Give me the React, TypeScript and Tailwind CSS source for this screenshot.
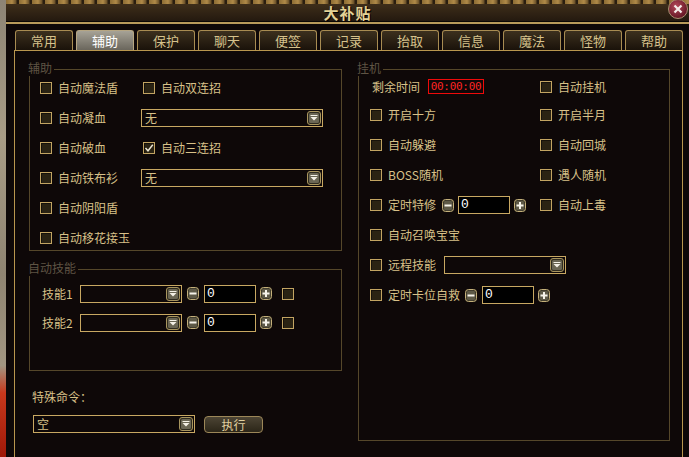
import React from 'react'

function Check({ checked }: { checked?: boolean }) {
  return (
    <span className="w-[12px] h-[12px] shrink-0 border border-[#c2a462] bg-[#2a2313] shadow-[inset_1px_1px_0_#15110a] flex items-center justify-center">
      {checked && (
        <svg width="10" height="10" viewBox="0 0 10 10">
          <path d="M1.5 5 L4 7.8 L8.8 1.8" stroke="#ece6d4" strokeWidth="1.4" fill="none" />
        </svg>
      )}
    </span>
  )
}

function Option({ label, checked }: { label: string; checked?: boolean }) {
  return (
    <div className="flex items-center gap-[6px]">
      <Check checked={checked} />
      <span className="whitespace-nowrap">{label}</span>
    </div>
  )
}

function Arrow() {
  return (
    <svg width="14" height="14" viewBox="0 0 14 14" className="shrink-0">
      <rect x="0.5" y="0.5" width="13" height="13" rx="2.5" fill="#2f2b1f" stroke="#a8955e" />
      <rect x="2" y="2" width="10" height="10" rx="1.5" fill="#6a6654" />
      <rect x="3.5" y="4" width="7" height="1" fill="#f4f1e6" />
      <path d="M3.5 6 H10.5 L7 9.5 Z" fill="#f4f1e6" />
    </svg>
  )
}

function Select({ w, text }: { w: string; text?: string }) {
  return (
    <div className={`${w} h-[18px] shrink-0 border border-[#c8a862] bg-[#0e0808] flex items-center justify-between pl-[3px] pr-[1px]`}>
      <span className="text-[12px]">{text}</span>
      <Arrow />
    </div>
  )
}

function Spin({ plus }: { plus?: boolean }) {
  return (
    <svg width="12" height="13" viewBox="0 0 12 13" className="shrink-0">
      <rect x="0.5" y="0.5" width="11" height="12" rx="3" fill="#3a3526" stroke="#c4b07a" />
      <rect x="1.8" y="1.8" width="8.4" height="9.4" rx="2" fill="#5e5a48" />
      <rect x="2.5" y="5.5" width="7" height="2" fill="#f6f3ea" />
      {plus && <rect x="5" y="3" width="2" height="7" fill="#f6f3ea" />}
    </svg>
  )
}

function NumInput() {
  return (
    <div className="w-[52px] h-[18px] shrink-0 border border-[#c8a862] bg-black text-white pl-[2px] flex items-center font-['Liberation_Mono',monospace] text-[13px]">
      0
    </div>
  )
}

function Group({ title, className, children }: { title: string; className: string; children: React.ReactNode }) {
  return (
    <div className={`relative border border-[#55472a] ${className}`}>
      <span className="absolute left-[-2px] top-[-10px] h-[16px] leading-[16px] pr-[2px] bg-[#0e0808] text-[#5f5444]">{title}</span>
      {children}
    </div>
  )
}

const tabs = ['常用', '辅助', '保护', '聊天', '便签', '记录', '抬取', '信息', '魔法', '怪物', '帮助']

export default function App() {
  return (
    <div className="w-[689px] h-[457px] overflow-hidden flex bg-[#0e0808] text-[12px] leading-[14px] text-[#d8c188] font-['Noto_Sans_CJK_SC','Noto_Sans',sans-serif]">
      <div className="w-[6px] h-full shrink-0 bg-[linear-gradient(180deg,#8d8475_0%,#a89c86_30%,#8f8472_60%,#a29682_80%,#c8381c_86%,#a01808_100%)]" />

      <div className="flex-1 flex flex-col min-w-0">
        {/* title bar */}
        <div className="relative h-[24px] shrink-0 flex flex-col">
          <div className="h-[4px] bg-[repeating-linear-gradient(90deg,#8c6c34_0px,#b08a48_6px,#6a5028_10px,#2a1e10_11px,#2a1e10_13px)]" />
          <div className="flex-1 flex items-center justify-center bg-[linear-gradient(180deg,#3e2e1a,#24190f)]">
            <span className="text-[15px] font-bold text-[#e4d296] tracking-[1px] [text-shadow:1px_1px_0_#000]">大补贴</span>
          </div>
          <div className="h-[1px] bg-[#0a0604]" />
          <div className="h-[2px] bg-[#b89a5a]" />
          <div className="absolute top-[-1px] right-[1px] w-[20px] h-[20px] rounded-full border border-[#a89070] bg-[radial-gradient(circle_at_40%_35%,#b44a5a,#6a1a28_70%)] flex items-center justify-center">
            <svg width="10" height="10" viewBox="0 0 10 10">
              <path d="M1.5 1.5 L8.5 8.5 M8.5 1.5 L1.5 8.5" stroke="#f4ece8" strokeWidth="2.2" />
            </svg>
          </div>
        </div>

        <div className="h-[6px] shrink-0" />

        {/* tabs */}
        <div className="h-[20px] shrink-0 flex gap-[3px] ml-[9px]">
          {tabs.map((t) =>
            t === '辅助' ? (
              <div key={t} className="w-[58px] h-[20px] rounded-t-[3px] border border-b-0 border-[#b6a682] bg-[linear-gradient(180deg,#a6a296,#6a665c)] text-white text-[13px] flex items-center justify-center">
                {t}
              </div>
            ) : (
              <div key={t} className="w-[58px] h-[20px] rounded-t-[3px] border border-b-0 border-[#a88c52] bg-[linear-gradient(180deg,#3c301e,#1a120a)] text-[#d6c28c] text-[13px] flex items-center justify-center">
                {t}
              </div>
            )
          )}
        </div>

        {/* content */}
        <div className="flex-1 ml-[8px] mr-[6px] border-l border-r border-t border-[#b8964e] flex gap-[16px] pl-[14px] pt-[18px]">
          <div className="w-[313px] flex flex-col">
            <Group title="辅助" className="h-[182px] pl-[10px] pt-[3px]">
              <div className="flex h-[30px] items-center">
                <div className="w-[101px]"><Option label="自动魔法盾" /></div>
                <div className="ml-[2px]"><Option label="自动双连招" /></div>
              </div>
              <div className="flex h-[30px] items-center">
                <div className="w-[101px]"><Option label="自动凝血" /></div>
                <Select w="w-[182px]" text="无" />
              </div>
              <div className="flex h-[30px] items-center">
                <div className="w-[101px]"><Option label="自动破血" /></div>
                <div className="ml-[2px]"><Option label="自动三连招" checked /></div>
              </div>
              <div className="flex h-[30px] items-center">
                <div className="w-[101px]"><Option label="自动铁布衫" /></div>
                <Select w="w-[182px]" text="无" />
              </div>
              <div className="flex h-[30px] items-center">
                <Option label="自动阴阳盾" />
              </div>
              <div className="flex h-[30px] items-center">
                <Option label="自动移花接玉" />
              </div>
            </Group>

            <Group title="自动技能" className="mt-[18px] h-[102px] pl-[12px] pt-[9px]">
              {['技能1', '技能2'].map((s) => (
                <div key={s} className="flex h-[29px] items-center">
                  <span className="w-[38px]">{s}</span>
                  <Select w="w-[102px]" />
                  <div className="ml-[5px]"><Spin /></div>
                  <div className="ml-[5px]"><NumInput /></div>
                  <div className="ml-[4px]"><Spin plus /></div>
                  <div className="ml-[10px]"><Check /></div>
                </div>
              ))}
            </Group>

            <div className="mt-[19px] ml-[3px]">特殊命令：</div>
            <div className="mt-[11px] ml-[4px] flex items-start">
              <Select w="w-[162px]" text="空" />
              <div className="ml-[9px] mt-[1px] w-[59px] h-[17px] rounded-[4px] border border-[#9c8758] bg-[linear-gradient(180deg,#4c4434,#2c2618)] flex items-center justify-center text-[#e0d0a0]">
                执行
              </div>
            </div>
          </div>

          <Group title="挂机" className="w-[312px] h-[372px] pl-[11px] pt-[3px]">
            <div className="flex h-[27px] items-center">
              <div className="w-[170px] flex items-center">
                <span className="ml-[2px] w-[56px]">剩余时间</span>
                <div className="w-[56px] h-[15px] border border-[#ee0a0a] flex items-center justify-center text-[#ff2424] font-['DejaVu_Sans_Mono',monospace] text-[11px] tracking-[-0.3px]">
                  00:00:00
                </div>
              </div>
              <Option label="自动挂机" />
            </div>
            <div className="flex h-[30px] items-center">
              <div className="w-[170px]"><Option label="开启十方" /></div>
              <Option label="开启半月" />
            </div>
            <div className="flex h-[30px] items-center">
              <div className="w-[170px]"><Option label="自动躲避" /></div>
              <Option label="自动回城" />
            </div>
            <div className="flex h-[30px] items-center">
              <div className="w-[170px]"><Option label="BOSS随机" /></div>
              <Option label="遇人随机" />
            </div>
            <div className="flex h-[30px] items-center">
              <div className="w-[170px] flex items-center">
                <Check />
                <span className="ml-[6px] w-[48px]">定时特修</span>
                <div className="ml-[6px]"><Spin /></div>
                <div className="ml-[4px]"><NumInput /></div>
                <div className="ml-[4px]"><Spin plus /></div>
              </div>
              <Option label="自动上毒" />
            </div>
            <div className="flex h-[30px] items-center">
              <Option label="自动召唤宝宝" />
            </div>
            <div className="flex h-[30px] items-center">
              <Check />
              <span className="ml-[6px] w-[48px]">远程技能</span>
              <div className="ml-[8px]"><Select w="w-[122px]" /></div>
            </div>
            <div className="flex h-[30px] items-center">
              <Check />
              <span className="ml-[6px] w-[72px]">定时卡位自救</span>
              <div className="ml-[5px]"><Spin /></div>
              <div className="ml-[5px]"><NumInput /></div>
              <div className="ml-[4px]"><Spin plus /></div>
            </div>
          </Group>
        </div>
      </div>
    </div>
  )
}
